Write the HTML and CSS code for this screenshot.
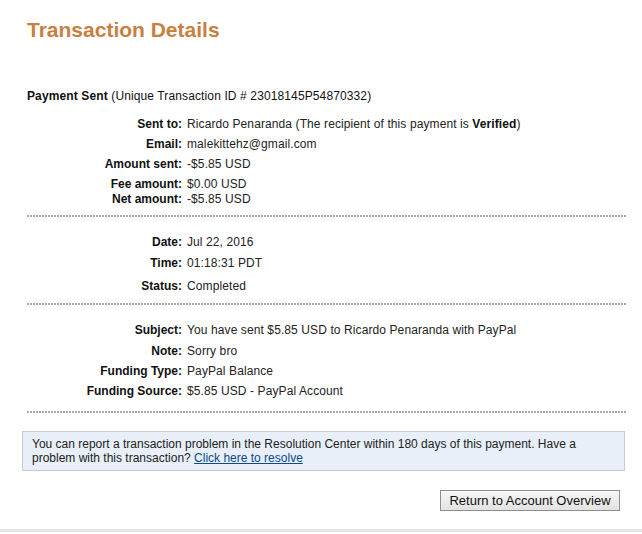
FILE: index.html
```html
<!DOCTYPE html>
<html>
<head>
<meta charset="utf-8">
<link rel="stylesheet" href="styles.css">
</head>
<body>
<div class="page">
  <h1 class="title">Transaction Details</h1>
  <p class="summary"><b>Payment Sent</b> (Unique Transaction ID # 23018145P54870332)</p>

  <div class="section s1">
    <div class="row r-first"><span class="label">Sent to:</span><span class="value">Ricardo Penaranda (The recipient of this payment is <b>Verified</b>)</span></div>
    <div class="row"><span class="label">Email:</span><span class="value">malekittehz@gmail.com</span></div>
    <div class="row"><span class="label">Amount sent:</span><span class="value">-$5.85 USD</span></div>
    <div class="row"><span class="label">Fee amount:</span><span class="value">$0.00 USD</span></div>
    <div class="row tight"><span class="label">Net amount:</span><span class="value">-$5.85 USD</span></div>
  </div>
  <div class="dots d1"></div>

  <div class="section s2">
    <div class="row r-first"><span class="label">Date:</span><span class="value">Jul 22, 2016</span></div>
    <div class="row r-time"><span class="label">Time:</span><span class="value">01:18:31 PDT</span></div>
    <div class="row r-status"><span class="label">Status:</span><span class="value">Completed</span></div>
  </div>
  <div class="dots d2"></div>

  <div class="section s3">
    <div class="row r-first"><span class="label">Subject:</span><span class="value">You have sent $5.85 USD to Ricardo Penaranda with PayPal</span></div>
    <div class="row r-note"><span class="label">Note:</span><span class="value">Sorry bro</span></div>
    <div class="row"><span class="label">Funding Type:</span><span class="value">PayPal Balance</span></div>
    <div class="row"><span class="label">Funding Source:</span><span class="value">$5.85 USD - PayPal Account</span></div>
  </div>
  <div class="dots d3"></div>

  <div class="notice"><span>You can report a transaction problem in the Resolution Center within 180 days of this payment. Have a</span><br><span>problem with this transaction?</span> <a href="#">Click here to resolve</a></div>

  <div class="actions"><button class="btn">Return to Account Overview</button></div>
</div>
<div class="footer-line"></div>
</body>
</html>
```
FILE: styles.css
```css
html, body {
  margin: 0;
  padding: 0;
  background: #fff;
}
body {
  font-family: "Liberation Sans", Arial, sans-serif;
  font-size: 12px;
  color: #222;
}
.page {
  padding: 0 15px 0 27px;
}
.title {
  margin: 17px 0 0;
  font-size: 21px;
  line-height: 26px;
  font-weight: bold;
  color: #c97f3f;
}
.summary {
  margin: 46px 0 0;
  line-height: 15px;
  color: #111;
  letter-spacing: 0.12px;
}
.section {
  display: flex;
  flex-direction: column;
}
.row {
  display: grid;
  grid-template-columns: 155px 1fr;
  column-gap: 5px;
  line-height: 15px;
  margin-top: 5px;
}
.row.tight { margin-top: 0; }
.s1 .r-first { margin-top: 13px; }
.s2 .r-first { margin-top: 18px; }
.s3 .r-first { margin-top: 18px; }
.r-time { margin-top: 6px; }
.r-status { margin-top: 8px; }
.r-note { margin-top: 6px; }
.label {
  text-align: right;
  font-weight: bold;
  color: #111;
}
.value {
  color: #222;
  letter-spacing: 0.1px;
}
.value b { color: #111; }
.dots {
  height: 2px;
  background-image: linear-gradient(to right, #a9a9a9 0 2px, transparent 2px 3px);
  background-size: 3px 2px;
  background-repeat: repeat-x;
}
.d1 { margin-top: 8px; }
.d2 { margin-top: 9px; }
.d3 { margin-top: 12px; }
.notice {
  margin: 18px 2px 0 -5px;
  padding: 5px 9px 5px 9px;
  line-height: 14px;
  background: #e8eff8;
  border: 1px solid #c7ccd2;
  color: #222;
}
.notice a {
  color: #0a4a8c;
  text-decoration: underline;
}
.actions {
  display: flex;
  justify-content: flex-end;
  margin-top: 19px;
  padding-right: 7px;
}
.btn {
  font-family: "Liberation Sans", Arial, sans-serif;
  font-size: 13px;
  color: #111;
  height: 21px;
  width: 180px;
  padding: 0 4px;
  background: linear-gradient(#f7f7f7, #e2e2e2);
  border: 1px solid #8e8e8e;
  border-radius: 0;
}
.footer-line {
  margin-top: 18px;
  height: 3px;
  background: #e4e4e4;
}
```
